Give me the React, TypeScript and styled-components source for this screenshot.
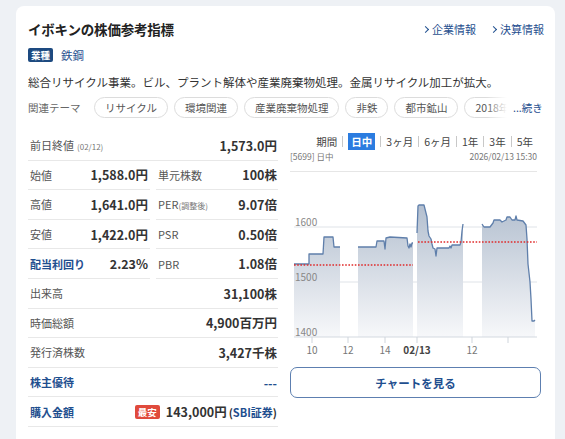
import React from 'react'
import styled, { createGlobalStyle } from 'styled-components'

const GlobalStyle = createGlobalStyle`
  body {
    margin: 0;
    background: #eef1f5;
    font-family: "Noto Sans CJK JP", "Noto Sans", sans-serif;
    color: #333;
  }
`

const Page = styled.div`
  padding: 6px 10px 0 16px;
  height: 439px;
  box-sizing: border-box;
  overflow: hidden;
`

const Card = styled.div`
  width: 539px;
  height: 460px;
  background: #fff;
  border-radius: 8px 8px 0 0;
  padding: 14px 11px 0 12px;
  box-sizing: border-box;
`

const HeaderRow = styled.div`
  display: flex;
  align-items: center;
  justify-content: space-between;
  height: 18px;
`

const Title = styled.h1`
  margin: 0;
  font-size: 13.5px;
  font-weight: 700;
  color: #222;
  letter-spacing: -0.2px;
`

const Links = styled.div`
  display: flex;
  gap: 15px;
`

const HeadLink = styled.a`
  display: flex;
  align-items: center;
  gap: 4px;
  font-size: 11px;
  color: #1f4f8f;
  &::before {
    content: '';
    width: 4px;
    height: 4px;
    border-top: 1.6px solid #1f4f8f;
    border-right: 1.6px solid #1f4f8f;
    transform: rotate(45deg);
  }
`

const IndustryRow = styled.div`
  display: flex;
  align-items: center;
  gap: 8px;
  margin-top: 9px;
`

const Badge = styled.span<{ $bg: string }>`
  display: inline-block;
  background: ${p => p.$bg};
  color: #fff;
  font-size: 9.5px;
  font-weight: 700;
  padding: 1px 3px;
  line-height: 12px;
  border-radius: 2px;
`

const BlueText = styled.span<{ $size?: number; $bold?: boolean }>`
  color: #1f4f8f;
  font-size: ${p => p.$size ?? 12}px;
  font-weight: ${p => (p.$bold ? 700 : 400)};
`

const Description = styled.p`
  margin: 10px 0 0;
  font-size: 11.5px;
  color: #333;
  line-height: 18px;
`

const ThemeRow = styled.div`
  display: flex;
  align-items: center;
  margin-top: 6px;
  height: 21px;
`

const ThemeLabel = styled.span`
  font-size: 10.5px;
  color: #666;
  width: 66px;
  flex-shrink: 0;
`

const Pills = styled.div`
  display: flex;
  gap: 6px;
  overflow: hidden;
  width: 418px;
  position: relative;
  &::after {
    content: '';
    position: absolute;
    right: 0;
    top: 0;
    bottom: 0;
    width: 26px;
    background: linear-gradient(to right, rgba(255,255,255,0), #fff 80%);
  }
`

const Pill = styled.span`
  flex-shrink: 0;
  height: 21px;
  box-sizing: border-box;
  border: 1px solid #dcdcdc;
  border-radius: 11px;
  padding: 0 10px;
  font-size: 10.5px;
  line-height: 19px;
  color: #555;
`

const More = styled.span`
  font-size: 10.5px;
  color: #1f4f8f;
  margin-left: 1px;
`

const Body = styled.div`
  display: grid;
  grid-template-columns: 250px 251px;
  column-gap: 12px;
  margin-top: 13px;
`

const Table = styled.div`
  display: flex;
  flex-direction: column;
`

const Row = styled.div`
  display: flex;
  align-items: center;
  justify-content: space-between;
  height: 29.6px;
  box-sizing: border-box;
  border-bottom: 1px solid #e8e8e8;
  padding: 0 1px 0 2px;
`

const SplitRow = styled.div`
  display: grid;
  grid-template-columns: 1fr 1fr;
  column-gap: 6px;
  & > ${Row} {
    padding: 0 2px;
  }
  & > ${Row}:last-child {
    padding-right: 1px;
  }
`

const Label = styled.span<{ $link?: boolean }>`
  font-size: 11px;
  color: ${p => (p.$link ? '#1f4f8f' : '#555')};
  font-weight: ${p => (p.$link ? 700 : 400)};
`

const Small = styled.span<{ $gap?: number }>`
  font-size: 8px;
  color: #777;
  margin-left: ${p => p.$gap ?? 3}px;
`

const Value = styled.span`
  font-size: 12.5px;
  font-weight: 700;
  color: #333;
  display: flex;
  align-items: center;
  gap: 6px;
`

const Broker = styled.span`
  font-size: 11px;
  margin-left: 2px;
`

const ChartCol = styled.div`
  display: flex;
  flex-direction: column;
`

const Tabs = styled.div`
  display: flex;
  align-items: center;
  justify-content: flex-end;
  padding-right: 8px;
  height: 17px;
  margin-top: 2px;
`

const Tab = styled.span<{ $active?: boolean }>`
  font-size: 10.5px;
  color: ${p => (p.$active ? '#fff' : '#444')};
  background: ${p => (p.$active ? '#2b7ce0' : 'transparent')};
  padding: ${p => (p.$active ? '0 3px' : '0')};
  line-height: 17px;
  font-weight: ${p => (p.$active ? 700 : 400)};
`

const Sep = styled.span`
  width: 1px;
  height: 11px;
  background: #c8c8c8;
  margin: 0 5px;
`

const SubLine = styled.div`
  display: flex;
  justify-content: space-between;
  font-size: 8.5px;
  color: #777;
  margin-top: 0;
  padding-bottom: 9px;
  border-bottom: 1px solid #e6e6e6;
  margin-right: 4px;
`

const ChartSvg = styled.svg`
  display: block;
  margin-top: 2px;
`

const ChartButton = styled.button`
  margin-top: 8px;
  height: 31px;
  width: 251px;
  border: 1.3px solid #5d7fb0;
  border-radius: 7px;
  background: #fff;
  color: #1f4f8f;
  font-family: inherit;
  font-size: 11.5px;
  font-weight: 700;
`

const S1 = 'M294,265 L309,265 L309,255 L323,255 L324,238 L333,238 L334,248 L340,248'
const S2 = 'M358,248 L376,248 L377,242 L384,242 L385,250 L386,239 L390,238 L407,239 L408,247 L409,249 L410,245 L411,248 L412,244 L413,244'
const S3 = 'M417,234 L418,207 L419,206 L424,206 L425,210 L427,218 L428,232 L429,237 L431,240 L432,245 L433,249 L435,250 L436,257 L437,249 L449,249 L450,247 L451,249 L452,246 L460,246 L461,243 L462,232 L463,225'
const S4 = 'M482,225 L484,228 L490,228 L493,224 L494,221 L500,221 L502,223 L506,221 L507,218 L510,218 L512,221 L515,221 L516,217 L517,221 L523,222 L526,226 L527,240 L528,265 L530,283 L531,300 L532,322 L534,322 L535,321'

const sections = [
  { d: S1, x0: 294, x1: 340 },
  { d: S2, x0: 358, x1: 413 },
  { d: S3, x0: 417, x1: 463 },
  { d: S4, x0: 482, x1: 535 },
]

const xTicks = [
  { x: 312, label: '10' },
  { x: 348, label: '12' },
  { x: 385, label: '14' },
  { x: 417, label: '02/13', bold: true },
  { x: 472, label: '12' },
  { x: 508, label: '' },
]

function Chart() {
  return (
    <ChartSvg width={251} height={185} viewBox="290 175 251 185">
      <defs>
        <linearGradient id="fillg" x1="0" y1="205" x2="0" y2="338" gradientUnits="userSpaceOnUse">
          <stop offset="0" stopColor="#b3bfcf" />
          <stop offset="1" stopColor="#f7f8fa" />
        </linearGradient>
      </defs>
      <line x1={294} x2={537} y1={228} y2={228} stroke="#dfe3e8" />
      <line x1={294} x2={537} y1={283} y2={283} stroke="#dfe3e8" />
      {sections.map((s, i) => (
        <path key={'f' + i} d={`${s.d} L${s.x1},338 L${s.x0},338 Z`} fill="url(#fillg)" />
      ))}
      {sections.map((s, i) => (
        <path key={'l' + i} d={s.d} fill="none" stroke="#5f7fab" strokeWidth={1.3} strokeLinejoin="round" />
      ))}
      <line x1={294} x2={413} y1={266} y2={266} stroke="#e02b2b" strokeWidth={1.6} strokeDasharray="1.6 1.6" />
      <line x1={418} x2={537} y1={243} y2={243} stroke="#e02b2b" strokeWidth={1.6} strokeDasharray="1.6 1.6" />
      <line x1={294} x2={537} y1={338} y2={338} stroke="#d3d9e0" />
      {xTicks.map(t => (
        <g key={t.x}>
          <line x1={t.x} x2={t.x} y1={338} y2={344} stroke="#cfd5dc" />
          {t.label && (
            <text
              x={t.x}
              y={355}
              textAnchor="middle"
              fontSize={10}
              fontWeight={t.bold ? 700 : 400}
              fill={t.bold ? '#444' : '#777'}
            >
              {t.label}
            </text>
          )}
        </g>
      ))}
      <text x={295} y={227} fontSize={10} fill="#888">1600</text>
      <text x={295} y={282} fontSize={10} fill="#888">1500</text>
      <text x={295} y={337} fontSize={10} fill="#888">1400</text>
    </ChartSvg>
  )
}

const themes = ['リサイクル', '環境関連', '産業廃棄物処理', '非鉄', '都市鉱山', '2018年の']
const periods = ['日中', '3ヶ月', '6ヶ月', '1年', '3年', '5年']

export default function App() {
  return (
    <>
      <GlobalStyle />
      <Page>
        <Card>
          <HeaderRow>
            <Title>イボキンの株価参考指標</Title>
            <Links>
              <HeadLink>企業情報</HeadLink>
              <HeadLink>決算情報</HeadLink>
            </Links>
          </HeaderRow>
          <IndustryRow>
            <Badge $bg="#1d4a80">業種</Badge>
            <BlueText $size={11.5}>鉄鋼</BlueText>
          </IndustryRow>
          <Description>総合リサイクル事業。ビル、プラント解体や産業廃棄物処理。金属リサイクル加工が拡大。</Description>
          <ThemeRow>
            <ThemeLabel>関連テーマ</ThemeLabel>
            <Pills>
              {themes.map(t => (
                <Pill key={t}>{t}</Pill>
              ))}
            </Pills>
            <More>...続き</More>
          </ThemeRow>
          <Body>
            <Table>
              <Row>
                <Label>
                  前日終値<Small>(02/12)</Small>
                </Label>
                <Value>1,573.0円</Value>
              </Row>
              <SplitRow>
                <Row><Label>始値</Label><Value>1,588.0円</Value></Row>
                <Row><Label>単元株数</Label><Value>100株</Value></Row>
              </SplitRow>
              <SplitRow>
                <Row><Label>高値</Label><Value>1,641.0円</Value></Row>
                <Row><Label>PER<Small $gap={0}>(調整後)</Small></Label><Value>9.07倍</Value></Row>
              </SplitRow>
              <SplitRow>
                <Row><Label>安値</Label><Value>1,422.0円</Value></Row>
                <Row><Label>PSR</Label><Value>0.50倍</Value></Row>
              </SplitRow>
              <SplitRow>
                <Row><Label $link>配当利回り</Label><Value>2.23%</Value></Row>
                <Row><Label>PBR</Label><Value>1.08倍</Value></Row>
              </SplitRow>
              <Row><Label>出来高</Label><Value>31,100株</Value></Row>
              <Row><Label>時価総額</Label><Value>4,900百万円</Value></Row>
              <Row><Label>発行済株数</Label><Value>3,427千株</Value></Row>
              <Row><Label $link>株主優待</Label><BlueText $size={12} $bold>---</BlueText></Row>
              <Row>
                <Label $link>購入金額</Label>
                <Value>
                  <Badge $bg="#e04a3c">最安</Badge>
                  <span>
                    143,000円
                    <Broker>
                      (<BlueText $size={11} $bold>SBI証券</BlueText>)
                    </Broker>
                  </span>
                </Value>
              </Row>
            </Table>
            <ChartCol>
              <Tabs>
                <Tab>期間</Tab>
                {periods.map(p => (
                  <React.Fragment key={p}>
                    <Sep />
                    <Tab $active={p === '日中'}>{p}</Tab>
                  </React.Fragment>
                ))}
              </Tabs>
              <SubLine>
                <span>[5699] 日中</span>
                <span>2026/02/13 15:30</span>
              </SubLine>
              <Chart />
              <ChartButton>チャートを見る</ChartButton>
            </ChartCol>
          </Body>
        </Card>
      </Page>
    </>
  )
}
